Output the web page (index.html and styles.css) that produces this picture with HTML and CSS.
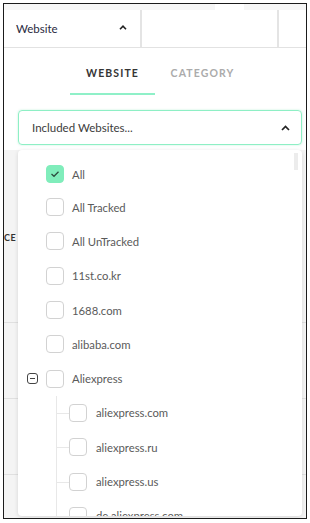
FILE: index.html
```html
<!DOCTYPE html>
<html lang="en">
<head>
    <meta charset="UTF-8">
    <meta name="viewport" content="width=device-width, initial-scale=1.0">
    <title>Website filter</title>
    <link rel="stylesheet" href="styles.css">
</head>
<body>

    <div class="frame">
        <div class="top-gap"></div>
        <div class="topbar"></div>

        <!-- table header behind the popover -->
        <div class="header">
            <div class="cell cell-website">
                <span>Website</span>
                <svg class="chev" width="8" height="5" viewBox="0 0 8 5"><path d="M1 4.2 L4 1.2 L7 4.2" fill="none" stroke="#222" stroke-width="1.6"/></svg>
            </div>
            <div class="cell cell-mid"></div>
            <div class="cell cell-last"></div>
        </div>

        <div class="table-bg">
            <div class="bg-head"><span class="col-label">CE</span></div>
            <div class="bg-row"></div>
            <div class="bg-row"></div>
            <div class="bg-row"></div>
        </div>

        <!-- popover -->
        <div class="popover">
            <div class="pop-head">
                <div class="tabs">
                    <div class="tab active">WEBSITE</div>
                    <div class="tab">CATEGORY</div>
                </div>
                <div class="select">
                    <span>Included Websites...</span>
                    <svg width="9" height="6" viewBox="0 0 9 6"><path d="M1 5 L4.5 1.5 L8 5" fill="none" stroke="#222" stroke-width="1.7"/></svg>
                </div>
            </div>

            <div class="list">
                <div class="scroll-thumb"></div>
                <div class="item first">
                    <span class="box checked">
                        <svg width="10" height="8" viewBox="0 0 10 8"><path d="M1.5 4 L4 6.3 L8.5 1.7" fill="none" stroke="#2d4d40" stroke-width="1.3"/></svg>
                    </span>
                    <span class="label">All</span>
                </div>
                <div class="item"><span class="box"></span><span class="label">All Tracked</span></div>
                <div class="item"><span class="box"></span><span class="label">All UnTracked</span></div>
                <div class="item"><span class="box"></span><span class="label">11st.co.kr</span></div>
                <div class="item"><span class="box"></span><span class="label">1688.com</span></div>
                <div class="item"><span class="box"></span><span class="label">alibaba.com</span></div>
                <div class="item parent">
                    <span class="toggle"></span>
                    <span class="box"></span><span class="label">Aliexpress</span>
                </div>
                <div class="children">
                    <div class="item child"><span class="box"></span><span class="label">aliexpress.com</span></div>
                    <div class="item child"><span class="box"></span><span class="label">aliexpress.ru</span></div>
                    <div class="item child"><span class="box"></span><span class="label">aliexpress.us</span></div>
                    <div class="item child"><span class="box"></span><span class="label">de.aliexpress.com</span></div>
                </div>
            </div>
        </div>
    </div>

</body>
</html>
```

FILE: styles.css
```css
body {
    margin: 0;
    background: #fff;
    font-family: 'Lato', sans-serif;
}
.frame {
    position: relative;
    margin: 3px 0 0 3px;
    width: 302px;
    height: 514px;
    border: 1px solid #1b1b1b;
    background: #f4f4f4;
    overflow: hidden;
}
.top-gap {
    position: absolute;
    top: -1px;
    left: 211px;
    width: 29px;
    height: 7px;
    background: #fff;
    z-index: 5;
}
.topbar {
    height: 6px;
    background: #f6f6f6;
}
.header {
    display: flex;
    height: 37px;
    background: #fff;
    border-bottom: 2px solid #e2e2e2;
}
.cell {
    border-right: 2px solid #e4e4e4;
}
.cell-website {
    width: 124px;
    padding-left: 12px;
    display: flex;
    align-items: center;
    justify-content: space-between;
    font-size: 11.5px;
    color: #2a2a40;
}
.cell-website .chev {
    margin-right: 13px;
    margin-top: -2px;
}
.cell-mid {
    width: 135px;
}
.cell-last {
    flex: 1;
    border-right: none;
}
.table-bg {
    background: #f4f4f4;
}
.bg-head {
    height: 274px;
    padding-top: 176px;
    box-sizing: border-box;
    border-bottom: 1px solid #e0e0e0;
}
.col-label {
    font-size: 9px;
    font-weight: 700;
    color: #333;
    letter-spacing: 0.5px;
}
.bg-row {
    height: 75px;
    border-bottom: 1px solid #e0e0e0;
}
.popover {
    position: absolute;
    top: 44px;
    left: 0;
    right: 0;
}
.pop-head {
    background: #fff;
    padding-bottom: 5px;
}
.tabs {
    display: flex;
    gap: 5px;
    margin-left: 66px;
}
.tab {
    width: 85px;
    height: 47px;
    padding-top: 18px;
    box-sizing: border-box;
    line-height: 14px;
    text-align: center;
    font-size: 10.5px;
    font-weight: 700;
    letter-spacing: 1.1px;
    color: #ababab;
    border-bottom: 2px solid transparent;
}
.tab.active {
    color: #353535;
    border-bottom-color: #8ff0c8;
}
.select {
    margin: 15px 0 0 14px;
    width: 284px;
    height: 35px;
    box-sizing: border-box;
    border: 1.5px solid #8eefc5;
    border-radius: 4px;
    box-shadow: 0 0 2px rgba(120, 230, 180, 0.5);
    display: flex;
    align-items: center;
    justify-content: space-between;
    padding: 0 11px 0 13px;
    font-size: 11.5px;
    color: #3c3c3c;
}
.list {
    position: relative;
    margin-left: 14px;
    width: 284px;
    height: 366px;
    box-sizing: border-box;
    padding-top: 8px;
    background: #fff;
    border-radius: 4px;
    box-shadow: 0 1px 4px rgba(0, 0, 0, 0.13);
    overflow: hidden;
}
.scroll-thumb {
    position: absolute;
    top: 3px;
    right: 4px;
    width: 4px;
    height: 17px;
    background: #ececec;
}
.item {
    position: relative;
    display: flex;
    align-items: center;
    height: 34.3px;
    padding-left: 28px;
    font-size: 11.3px;
    color: #5a5a5a;
}
.item.first {
    height: 32px;
}
.box {
    width: 18px;
    height: 18px;
    box-sizing: border-box;
    border: 1px solid #d2d2d2;
    border-radius: 4px;
    display: flex;
    align-items: center;
    justify-content: center;
    flex-shrink: 0;
}
.box.checked {
    background: #80edbb;
    border-color: #80edbb;
}
.label {
    margin-left: 8px;
}
.item.parent {
    padding-left: 9px;
}
.toggle {
    position: relative;
    width: 11px;
    height: 11px;
    box-sizing: border-box;
    border: 1.3px solid #444;
    border-radius: 3px;
    margin-right: 8px;
}
.toggle::after {
    content: "";
    position: absolute;
    left: 2px;
    right: 2px;
    top: 3.5px;
    height: 1.3px;
    background: #444;
}
.children {
    margin-left: 38px;
    border-left: 1px solid #e8e8e8;
}
.item.child {
    padding-left: 12px;
}
.item.child::before {
    content: "";
    position: absolute;
    left: 0;
    top: 50%;
    width: 12px;
    height: 1px;
    background: #e8e8e8;
}
.item.child .label {
    margin-left: 9px;
}
```
